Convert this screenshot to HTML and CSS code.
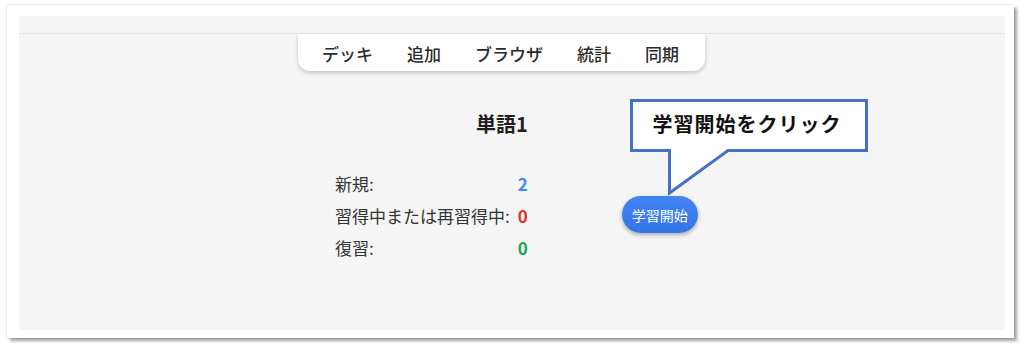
FILE: index.html
```html
<!DOCTYPE html>
<html lang="ja">
<head>
    <meta charset="UTF-8">
    <meta name="viewport" content="width=device-width, initial-scale=1.0">
    <title>単語1 - 概要</title>
    <link rel="stylesheet" href="styles.css">
</head>
<body>
    <div class="frame">
        <div class="screen">
            <div class="top-strip"></div>

            <nav class="menu">
                <a href="#" class="menu-item">デッキ</a>
                <a href="#" class="menu-item">追加</a>
                <a href="#" class="menu-item">ブラウザ</a>
                <a href="#" class="menu-item">統計</a>
                <a href="#" class="menu-item">同期</a>
            </nav>

            <main class="overview">
                <div class="deck">
                    <h1 class="deck-title">単語1</h1>
                    <div class="counts">
                        <span class="count-label">新規:</span>
                        <span class="count-value new">2</span>
                        <span class="count-label">習得中または再習得中:</span>
                        <span class="count-value learn">0</span>
                        <span class="count-label">復習:</span>
                        <span class="count-value review">0</span>
                    </div>
                </div>
                <button class="study-btn">学習開始</button>
            </main>
        </div>

        <!-- 吹き出し（注釈） -->
        <div class="callout">
            <svg class="callout-shape" width="244" height="100" viewBox="0 0 244 100">
                <path d="M3.5 3.5 H238.5 V53.5 H100 L41.5 96 V53.5 H3.5 Z" fill="#ffffff" stroke="#4472c4" stroke-width="3" stroke-linejoin="miter"/>
            </svg>
            <div class="callout-text">学習開始をクリック</div>
        </div>
    </div>
</body>
</html>
```

FILE: styles.css
```css
:root {
    --screen-bg: #f5f5f5;
    --line: #e4e4e4;
    --text-color: #333;
    --title-color: #1f1f1f;
    --new-color: #3f87f5;
    --learn-color: #e3312d;
    --review-color: #25a052;
}

* {
    margin: 0;
    padding: 0;
    box-sizing: border-box;
    font-family: "Noto Sans CJK JP", "Noto Sans", sans-serif;
}

html, body {
    height: 352px;
    overflow: hidden;
}

body {
    background-color: #ffffff;
    color: var(--text-color);
    padding: 5px 0 0 7px;
}

.frame {
    position: relative;
    width: 1007px;
    height: 333px;
    padding: 11px 9px 8px 12px;
    background-color: #ffffff;
    box-shadow: 3px 3px 3px rgba(0,0,0,0.35), 0 0 2px rgba(0,0,0,0.2);
}

.screen {
    height: 100%;
    background-color: var(--screen-bg);
}

.top-strip {
    height: 18px;
    border-bottom: 1px solid var(--line);
}

.menu {
    display: flex;
    width: max-content;
    height: 37px;
    margin-left: 279px;
    padding: 0 9px 0 7px;
    background-color: #ffffff;
    border-radius: 0 0 12px 12px;
    box-shadow: 0 2px 4px rgba(0,0,0,0.2);
}

.menu-item {
    padding: 2px 17px 0;
    font-size: 17px;
    font-weight: 500;
    line-height: 35px;
    color: #2b2b2b;
    text-decoration: none;
}

.overview {
    display: flex;
    align-items: flex-end;
    padding-left: 316px;
    margin-top: 39px;
}

.deck {
    display: flex;
    flex-direction: column;
}

.deck-title {
    font-size: 20px;
    font-weight: 700;
    line-height: 28px;
    color: var(--title-color);
    text-align: right;
    margin-bottom: 29px;
}

.counts {
    display: grid;
    grid-template-columns: auto auto;
    grid-auto-rows: 32px;
    column-gap: 8px;
    align-items: center;
}

.count-label {
    font-size: 17px;
    color: var(--text-color);
}

.count-value {
    justify-self: end;
    font-size: 17px;
    font-weight: 700;
}

.new { color: var(--new-color); }
.learn { color: var(--learn-color); }
.review { color: var(--review-color); }

.study-btn {
    height: 37px;
    margin: 0 0 30px 94px;
    padding: 0 10px;
    border: none;
    border-radius: 19px;
    background: linear-gradient(#4285f4, #3474e6);
    color: #ffffff;
    font-size: 14px;
    box-shadow: 0 2px 4px rgba(0,0,0,0.3);
    cursor: pointer;
}

.callout {
    position: absolute;
    left: 621px;
    top: 92px;
    width: 244px;
    height: 100px;
}

.callout-shape {
    display: block;
}

.callout-text {
    position: absolute;
    left: 3px;
    top: 3px;
    width: 236px;
    height: 49px;
    display: flex;
    align-items: center;
    justify-content: center;
    padding: 0 4px 3px 0;
    font-size: 20px;
    font-weight: 700;
    letter-spacing: 1px;
    color: #111;
}
```
